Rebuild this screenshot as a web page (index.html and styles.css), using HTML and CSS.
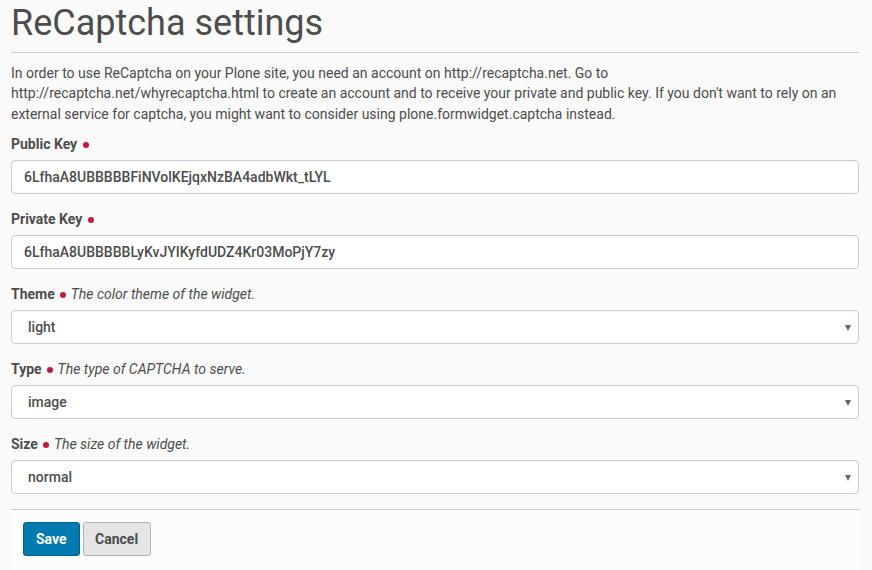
FILE: index.html
```html
<!DOCTYPE html>
<html>
<head>
<meta charset="utf-8">
<link rel="stylesheet" href="styles.css">
</head>
<body>
<div class="page">
  <h1 class="title">ReCaptcha settings</h1>
  <hr class="rule">
  <p class="intro">In order to use ReCaptcha on your Plone site, you need an account on http://recaptcha.net. Go to http://recaptcha.net/whyrecaptcha.html to create an account and to receive your private and public key. If you don't want to rely on an external service for captcha, you might want to consider using plone.formwidget.captcha instead.</p>
  <form class="form">
    <div class="field">
      <label class="label">Public Key <span class="req"></span></label>
      <div class="control">6LfhaA8UBBBBBFiNVolKEjqxNzBA4adbWkt_tLYL</div>
    </div>
    <div class="field">
      <label class="label">Private Key <span class="req"></span></label>
      <div class="control">6LfhaA8UBBBBBLyKvJYIKyfdUDZ4Kr03MoPjY7zy</div>
    </div>
    <div class="field">
      <label class="label">Theme <span class="req"></span> <span class="help">The color theme of the widget.</span></label>
      <div class="control select">light<span class="arrow"></span></div>
    </div>
    <div class="field">
      <label class="label">Type <span class="req"></span> <span class="help">The type of CAPTCHA to serve.</span></label>
      <div class="control select">image<span class="arrow"></span></div>
    </div>
    <div class="field">
      <label class="label">Size <span class="req"></span> <span class="help">The size of the widget.</span></label>
      <div class="control select">normal<span class="arrow"></span></div>
    </div>
    <div class="actions">
      <button type="button" class="btn btn-save">Save</button>
      <button type="button" class="btn btn-cancel">Cancel</button>
    </div>
  </form>
</div>
</body>
</html>
```
FILE: styles.css
```css
html, body {
  margin: 0;
  padding: 0;
  background: #fafafa;
}
body {
  font-family: Roboto, "Liberation Sans", sans-serif;
  font-size: 14px;
  line-height: 20px;
  color: #4d4d4d;
}
.page {
  padding: 0 13px 0 11px;
}
.title {
  margin: 3px 0 9px;
  font-size: 36px;
  line-height: 40px;
  font-weight: 400;
  color: #4d4d4d;
}
.rule {
  margin: 0;
  border: 0;
  border-top: 1px solid #cccccc;
  height: 0;
}
.intro {
  margin: 10px 0 10px;
  line-height: 20.3px;
}
.form {
  margin: 0;
}
.field {
  margin-bottom: 15px;
}
.label {
  display: block;
  font-weight: 700;
  line-height: 20px;
  margin-bottom: 6px;
}
.req {
  display: inline-block;
  width: 6px;
  height: 6px;
  border-radius: 50%;
  background: #c4183c;
  margin-left: 2px;
  vertical-align: 1px;
}
.help {
  font-weight: 400;
  font-style: italic;
  margin-left: 1px;
}
.control {
  box-sizing: border-box;
  height: 34px;
  padding: 6px 12px;
  line-height: 20px;
  background: #ffffff;
  border: 1px solid #cccccc;
  border-radius: 4px;
  font-weight: 500;
  color: #4d4d4d;
  box-shadow: inset 0 1px 2px rgba(0,0,0,0.04);
  position: relative;
}
.select {
  padding-left: 16px;
}
.arrow {
  position: absolute;
  right: 7px;
  top: 14px;
  width: 0;
  height: 0;
  border-left: 3px solid transparent;
  border-right: 3px solid transparent;
  border-top: 6px solid #666666;
}
.actions {
  margin-top: 0;
  border-top: 1px solid #cccccc;
  background: #fcfcfc;
  padding: 12px 12px 15px;
  display: flex;
  gap: 3px;
}
.btn {
  font-family: Roboto, "Liberation Sans", sans-serif;
  font-size: 14px;
  font-weight: 700;
  line-height: 20px;
  height: 34px;
  padding: 6px 12px;
  border-radius: 3px;
  border: 1px solid;
  cursor: pointer;
}
.btn-save {
  background: #007bb1;
  border-color: #00608a;
  color: #ffffff;
}
.btn-cancel {
  background: #e5e5e5;
  border-color: #b2b2b2;
  color: #4d4d4d;
  padding: 6px 11.5px;
}
```
